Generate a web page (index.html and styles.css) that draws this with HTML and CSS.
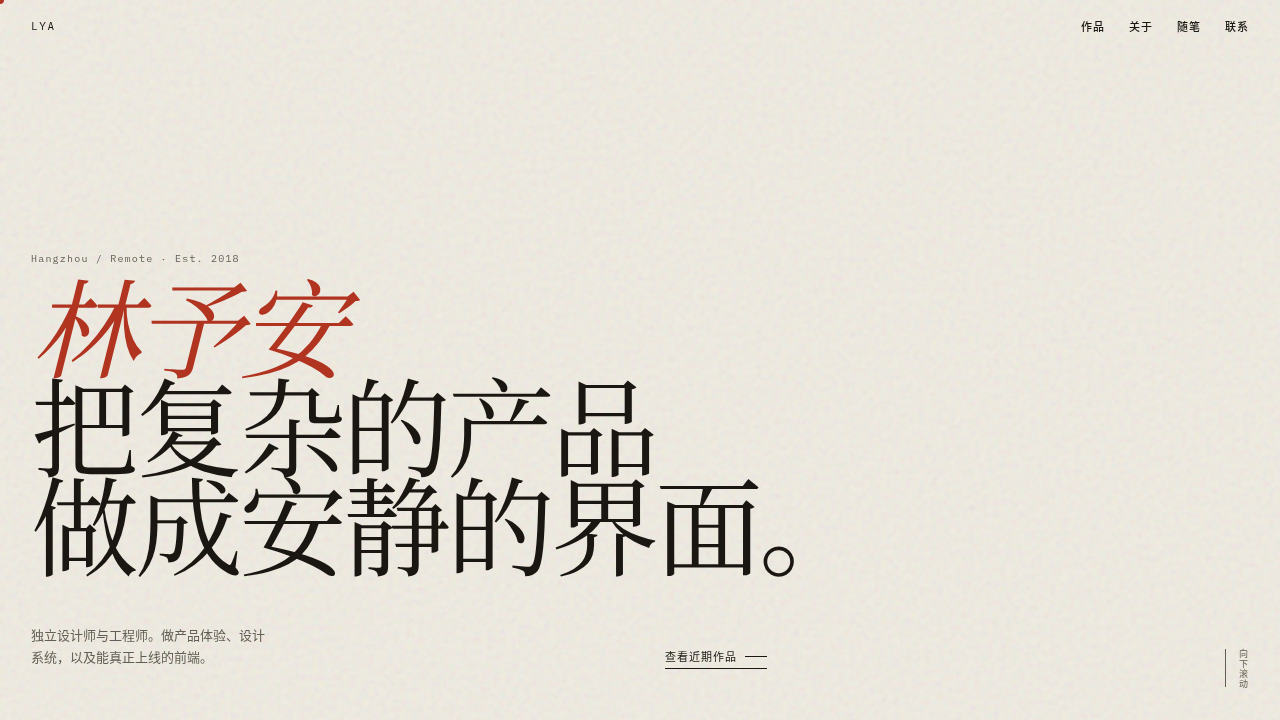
FILE: index.html
```
<!doctype html>
<html lang="zh-CN">
<head>
  <meta charset="utf-8">
  <meta name="viewport" content="width=device-width, initial-scale=1">
  <title>林予安</title>
  <link rel="stylesheet" href="styles.css">
</head>
<body>

  <svg class="grain" aria-hidden="true">
    <filter id="grain" x="0" y="0" width="100%" height="100%">
      <feTurbulence type="fractalNoise" baseFrequency="0.16" numOctaves="3"/>
      <feColorMatrix values="1.4 0 0 0 -0.1  0 1.4 0 0 -0.1  0 0 1.4 0 -0.1  0 0 0 0 1"/>
    </filter>
    <rect width="100%" height="100%" filter="url(#grain)"/>
  </svg>
  <div class="cursor" aria-hidden="true"></div>

  <header class="bar">
    <a class="logo" href="#top">LYA</a>
    <nav class="nav">
      <a href="#work">作品</a>
      <a href="#about">关于</a>
      <a href="#notes">随笔</a>
      <a href="#contact">联系</a>
    </nav>
  </header>

  <main class="hero" id="top">
    <p class="eyebrow">Hangzhou / Remote · Est. 2018</p>
    <h1 class="title">
      <em>林予安</em>
      <span>把复杂的产品</span>
      <span>做成安静的界面。</span>
    </h1>
    <div class="foot">
      <p class="intro">独立设计师与工程师。做产品体验、设计系统，以及能真正上线的前端。</p>
      <div class="actions">
        <a class="cta" href="#work">查看近期作品</a>
        <div class="scroll">向下滚动</div>
      </div>
    </div>
  </main>

</body>
</html>
```
FILE: styles.css
```
:root {
  --paper: #efeae1;
  --ink: #1a1712;
  --muted: #625e54;
  --red: #b03420;
  --sans: "Noto Sans CJK SC", sans-serif;
  --serif: "Noto Serif SC", "Noto Serif CJK SC", "Source Han Serif SC", "Songti SC", serif;
  --mono: "IBM Plex Mono", "Liberation Mono", monospace;
}

* {
  box-sizing: border-box;
}

body {
  margin: 0;
  min-height: 100vh;
  display: flex;
  flex-direction: column;
  background: var(--paper);
  color: var(--ink);
  font-family: var(--sans);
}

a {
  color: inherit;
  text-decoration: none;
}

p, h1 {
  margin: 0;
}

.grain {
  position: fixed;
  z-index: -1;
  inset: 0;
  width: 100%;
  height: 100%;
  opacity: 0.06;
  pointer-events: none;
}

.cursor {
  position: fixed;
  top: -4px;
  left: -4px;
  width: 8px;
  height: 8px;
  border-radius: 50%;
  background: var(--red);
}

.bar {
  display: flex;
  justify-content: space-between;
  align-items: center;
  padding: 17px 31px;
  line-height: 18px;
}

.logo {
  font-family: var(--mono);
  font-size: 11px;
  letter-spacing: 0.15em;
}

.nav {
  display: flex;
  gap: 24px;
  font-size: 11px;
  font-weight: 500;
  letter-spacing: 1px;
}

.hero {
  flex: 1;
  display: flex;
  flex-direction: column;
  justify-content: flex-end;
  padding: 0 31px;
}

.eyebrow {
  margin-bottom: 7px;
  color: var(--muted);
  font-family: var(--mono);
  font-size: 10px;
  line-height: 16px;
  letter-spacing: 0.12em;
}

.title {
  font-family: var(--serif);
  font-size: 108px;
  font-weight: 400;
  line-height: 99px;
  letter-spacing: -4px;
}

.title em,
.title span {
  display: block;
}

.title em {
  color: var(--red);
}

.foot {
  display: grid;
  grid-template-columns: 1fr 1fr;
  gap: 50px;
  align-items: end;
  margin-top: 53px;
}

.intro {
  max-width: 240px;
  margin-bottom: 52px;
  color: var(--muted);
  font-size: 13px;
  line-height: 22px;
}

.actions {
  display: flex;
  justify-content: space-between;
  align-items: flex-end;
}

.cta {
  display: flex;
  align-items: center;
  gap: 8px;
  margin-bottom: 51px;
  padding-bottom: 4px;
  border-bottom: 1px solid var(--ink);
  font-size: 11px;
  line-height: 16px;
  letter-spacing: 1px;
}

.cta::after {
  content: "";
  width: 22px;
  height: 1px;
  background: var(--ink);
}

.scroll {
  display: flex;
  flex-direction: column;
  gap: 11px;
  margin-bottom: 31px;
  color: var(--muted);
  font-size: 9px;
  line-height: 12px;
  letter-spacing: 1px;
  writing-mode: vertical-rl;
}

.scroll::after {
  content: "";
  width: 1px;
  height: 38px;
  background: var(--muted);
}
```
